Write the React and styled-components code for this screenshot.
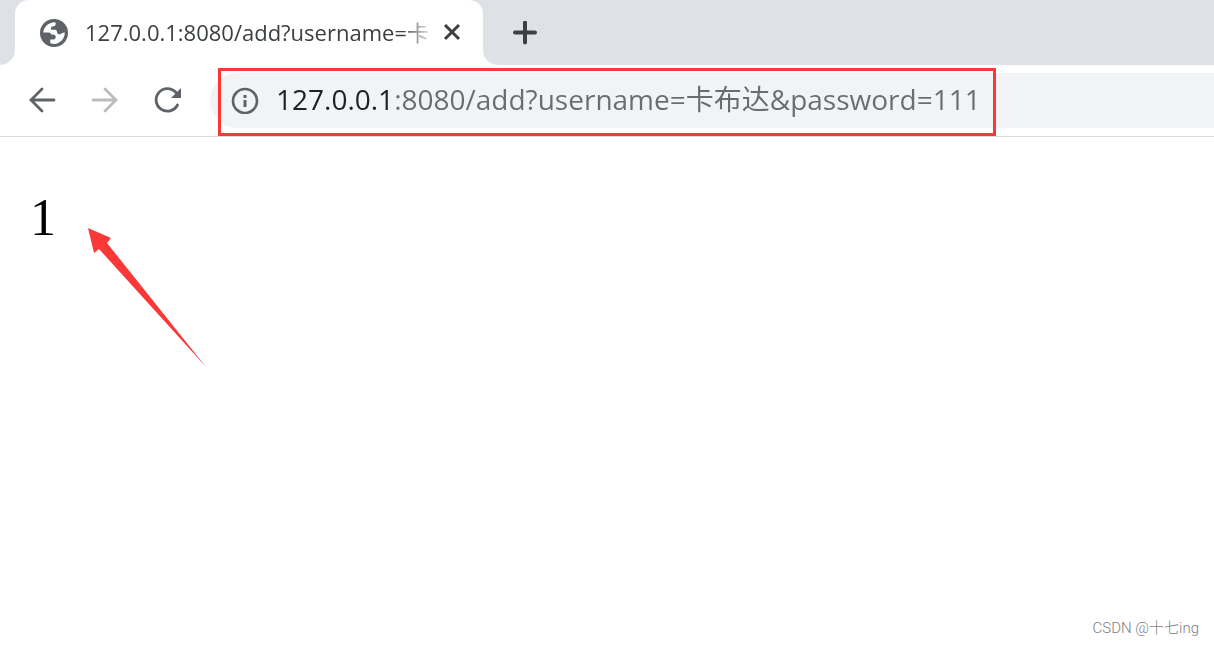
import styled, { createGlobalStyle } from "styled-components";

const HOST = "127.0.0.1";
const PORT = ":8080";

function App() {
    return (
        <>
            <GlobalStyle />
            <Browser>
                <TabStrip>
                    <StripEdge />
                    <Tab>
                        <GlobeIcon />
                        <TabTitle>{`${HOST}${PORT}/add?username=卡`}</TabTitle>
                        <IconButton aria-label="Close tab">
                            <CloseIcon />
                        </IconButton>
                    </Tab>
                    <StripRest>
                        <IconButton aria-label="New tab">
                            <PlusIcon />
                        </IconButton>
                    </StripRest>
                </TabStrip>

                <Toolbar>
                    <NavButtons>
                        <IconButton aria-label="Back">
                            <BackIcon />
                        </IconButton>
                        <IconButton aria-label="Forward" disabled>
                            <ForwardIcon />
                        </IconButton>
                        <IconButton aria-label="Reload">
                            <ReloadIcon />
                        </IconButton>
                    </NavButtons>
                    <AddressBar>
                        <IconButton aria-label="Site information">
                            <InfoIcon />
                        </IconButton>
                        <AddressInput
                            type="text"
                            aria-label="Address"
                            spellCheck="false"
                            defaultValue={`${HOST}${PORT}/add?username=卡布达&password=111`}
                        />
                        <Highlight />
                    </AddressBar>
                </Toolbar>

                <Page>
                    <Result>1</Result>
                    <Arrow viewBox="0 0 120 140" aria-hidden="true">
                        <path d="M0 0L23 10L19 15L118 139L11 21L6 25Z" />
                    </Arrow>
                    <Watermark>CSDN @十七ing</Watermark>
                </Page>
            </Browser>
        </>
    );
}

const GlobeIcon = () => (
    <Icon $size={28} viewBox="0 0 28 28">
        <circle cx="14" cy="14" r="14" fill="#5f6368" />
        <path
            d="M3.300 13.400C3.600 8 8.500 3.300 15 3.200L15.800 4.500C15.800 6.600 14.500 7.400 12.500 7.400C10.800 7.400 10.500 9.500 11.200 10.700H15.300C17.500 10.700 16.500 14.500 18.500 15.300C20.500 15.800 22 13.800 24.800 13.600C25 19.500 20 25 14 25L10.300 24.300V20.600H13.500C15.500 20.600 16 18.500 15.600 17C15.100 15.400 13 15.800 11.300 15.500C10.800 13.800 9.500 13.400 8 13.400Z"
            fill="#fff"
        />
    </Icon>
);

const CloseIcon = () => (
    <Icon $size={18} viewBox="0 0 18 18">
        <path d="M2 1L16 15M16 1L2 15" stroke="#3c4043" strokeWidth="3" />
    </Icon>
);

const PlusIcon = () => (
    <Icon $size={24} viewBox="0 0 24 24">
        <path
            d="M12 1.500V21.500M2 11.500H22"
            stroke="#3c4043"
            strokeWidth="4"
            strokeLinecap="round"
        />
    </Icon>
);

const BackIcon = () => (
    <Icon $size={28} viewBox="0 0 28 28">
        <path
            d="M26 14H3M14 3L3 14L14 25"
            fill="none"
            stroke="#5f6368"
            strokeWidth="2.8"
            strokeLinecap="round"
        />
    </Icon>
);

const ForwardIcon = () => (
    <Icon $size={28} viewBox="0 0 28 28">
        <path
            d="M2 14H25M14 3L25 14L14 25"
            fill="none"
            stroke="#babcbe"
            strokeWidth="2.8"
            strokeLinecap="round"
        />
    </Icon>
);

const ReloadIcon = () => (
    <Icon $size={28} viewBox="0 0 28 28">
        <path
            d="M23.500 19A11.300 11.300 0 1 1 22 6.500"
            fill="none"
            stroke="#5f6368"
            strokeWidth="2.8"
            strokeLinecap="round"
        />
        <path d="M27 2V12H17Z" fill="#5f6368" />
    </Icon>
);

const InfoIcon = () => (
    <Icon $size={28} viewBox="0 0 28 28">
        <circle
            cx="14"
            cy="15"
            r="12"
            fill="none"
            stroke="#5f6368"
            strokeWidth="2.6"
        />
        <path d="M12.500 9H15.500V12H12.500ZM12.500 14H15.500V21H12.500Z" fill="#5f6368" />
    </Icon>
);

const GlobalStyle = createGlobalStyle`
    * {
        box-sizing: border-box;
    }

    body {
        margin: 0;
        background-color: white;
        font-family: "Open Sans", "Noto Sans CJK SC", sans-serif;
    }
`;

const Browser = styled.div`
    display: flex;
    flex-direction: column;
    min-height: 100vh;
`;

const TabStrip = styled.div`
    display: flex;
    height: 65px;
    background-color: white;
`;

const StripEdge = styled.div`
    width: 15px;
    background-color: #dee1e6;
    border-bottom-right-radius: 15px;
`;

const Tab = styled.div`
    display: flex;
    align-items: center;
    flex: 0 1 468px;
    min-width: 0;
    padding: 0 22px 0 25px;
    background-color: white;
    border-radius: 14px 14px 0 0;
    box-shadow: 0 -16px 0 16px #dee1e6;
    clip-path: inset(0);
`;

const TabTitle = styled.span`
    flex: 1;
    min-width: 0;
    margin: 0 9px 2px 17px;
    overflow: hidden;
    white-space: nowrap;
    font-size: 22px;
    line-height: 32px;
    color: #3c4043;
    mask-image: linear-gradient(to left, transparent, black 32px);
`;

const StripRest = styled.div`
    display: flex;
    align-items: center;
    flex: 1;
    padding-left: 30px;
    background-color: #dee1e6;
    border-bottom-left-radius: 15px;
`;

const IconButton = styled.button`
    display: flex;
    flex-shrink: 0;
    padding: 0;
    border: none;
    background: none;
    cursor: pointer;
`;

const Icon = styled.svg`
    display: block;
    flex-shrink: 0;
    width: ${({ $size }) => $size}px;
    height: ${({ $size }) => $size}px;
`;

const Toolbar = styled.div`
    display: flex;
    align-items: center;
    height: 72px;
    padding-bottom: 1px;
    border-bottom: 1px solid #dadce0;
`;

const NavButtons = styled.div`
    display: flex;
    gap: 35px;
    padding: 0 28px;
`;

const AddressBar = styled.div`
    position: relative;
    display: flex;
    align-items: center;
    flex: 1;
    gap: 17px;
    height: 55px;
    padding-left: 21px;
    background-color: #f1f3f4;
    border-radius: 28px 0 0 28px;
`;

/* the host part of the address is darker than the rest */
const AddressInput = styled.input`
    flex: 1;
    min-width: 0;
    height: 44px;
    padding: 0 0 4px;
    border: none;
    outline: none;
    font-family: inherit;
    font-size: 28px;
    color: transparent;
    background: linear-gradient(to right, #202124 117px, #6a6d70 117px);
    background-clip: text;
`;

const Highlight = styled.div`
    position: absolute;
    top: -5px;
    left: 8px;
    width: 778px;
    height: 68px;
    border: 3px solid #fb3838;
    pointer-events: none;
`;

const Page = styled.main`
    position: relative;
    flex: 1;
    padding: 51px 30px;
`;

const Result = styled.p`
    margin: 0;
    font-family: "Liberation Serif", serif;
    font-size: 52px;
    line-height: 60px;
    color: black;
`;

const Arrow = styled.svg`
    position: absolute;
    top: 91px;
    left: 88px;
    width: 120px;
    height: 140px;
    fill: #fb3838;
`;

const Watermark = styled.span`
    position: absolute;
    right: 15px;
    bottom: 6px;
    font-family: Roboto, "Noto Sans CJK SC", sans-serif;
    font-size: 15px;
    font-weight: 300;
    line-height: 22px;
    color: #808080;
`;

export default App;
